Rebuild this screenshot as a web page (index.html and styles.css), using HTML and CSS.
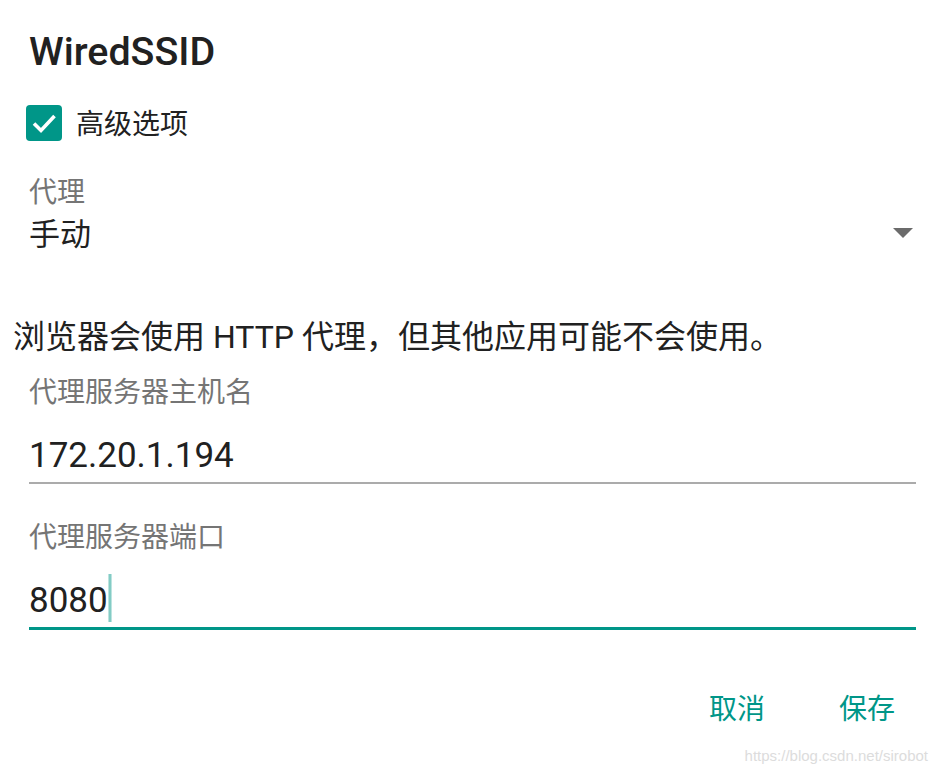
FILE: index.html
```html
<!DOCTYPE html>
<html lang="zh-CN">
<head>
    <meta charset="UTF-8">
    <title>WiredSSID</title>
    <link rel="stylesheet" href="styles.css">
</head>
<body>
    <div class="dialog">
        <h1 class="title">WiredSSID</h1>

        <label class="check-row">
            <span class="checkbox">
                <svg viewBox="0 0 36 36" width="36" height="36">
                    <path d="M8 18.5 L15 25.5 L28.5 11" fill="none" stroke="#fff" stroke-width="3.6"/>
                </svg>
            </span>
            <span class="check-label">高级选项</span>
        </label>

        <div class="field-label">代理</div>
        <div class="spinner">
            <span class="spinner-value">手动</span>
            <span class="spinner-arrow"></span>
        </div>

        <p class="note">浏览器会使用 HTTP 代理，但其他应用可能不会使用。</p>

        <div class="field-label host-label">代理服务器主机名</div>
        <div class="input">172.20.1.194</div>

        <div class="field-label port-label">代理服务器端口</div>
        <div class="input focused">8080<span class="cursor"></span></div>

        <div class="actions">
            <span class="btn">取消</span>
            <span class="btn">保存</span>
        </div>
    </div>
    <div class="watermark">https://blog.csdn.net/sirobot</div>
</body>
</html>
```

FILE: styles.css
```css
* {
    margin: 0;
    padding: 0;
    box-sizing: border-box;
}

body {
    font-family: Roboto, "Noto Sans CJK SC", sans-serif;
    background: #fff;
    color: #212121;
    width: 938px;
    height: 773px;
    position: relative;
    overflow: hidden;
}

.dialog {
    padding: 28px 22px 0 29px;
}

.title {
    font-size: 39.4px;
    font-weight: 500;
    line-height: 48px;
    color: #212121;
}

/* checkbox row */
.check-row {
    display: flex;
    height: 36px;
    margin-top: 29px;
    margin-left: -3px;
}

.checkbox {
    width: 36px;
    height: 36px;
    border-radius: 4px;
    background: #009688;
    display: block;
}

.checkbox svg {
    display: block;
}

.check-label {
    font-size: 28px;
    line-height: 33px;
    margin-top: 3px;
    margin-left: 14px;
}

.field-label {
    font-size: 28px;
    color: #757575;
    line-height: 34px;
    margin-top: 35px;
}

/* proxy spinner */
.spinner {
    display: flex;
    align-items: center;
    justify-content: space-between;
    height: 40px;
    margin-top: 5px;
}

.spinner-value {
    font-size: 31px;
    line-height: 40px;
}

.spinner-arrow {
    width: 0;
    height: 0;
    border-left: 10px solid transparent;
    border-right: 10px solid transparent;
    border-top: 10px solid #6b6b6b;
    margin-right: 3px;
    margin-top: -4px;
}

.note {
    font-size: 32px;
    line-height: 40px;
    margin-top: 62px;
    margin-left: -16px;
}

.host-label {
    margin-top: 19px;
}

.port-label {
    margin-top: 37px;
}

/* text inputs */
.input {
    font-size: 35px;
    line-height: 44px;
    margin-top: 24px;
    padding-bottom: 4px;
    border-bottom: 2px solid #ababab;
    position: relative;
}

.input.focused {
    border-bottom: 3px solid #009688;
}

.cursor {
    position: absolute;
    left: 79px;
    top: -5px;
    width: 4px;
    height: 48px;
    background: linear-gradient(90deg, rgba(0, 150, 136, 0.15), rgba(0, 150, 136, 0.6), rgba(0, 150, 136, 0.15));
}

.actions {
    display: flex;
    justify-content: flex-end;
    gap: 74px;
    margin-top: 62px;
    padding-right: 21px;
}

.btn {
    font-size: 28px;
    line-height: 36px;
    color: #009688;
}

.watermark {
    position: absolute;
    right: 10px;
    bottom: 9px;
    font-family: "Liberation Sans", sans-serif;
    font-size: 15px;
    color: #dcdcdc;
}
```
